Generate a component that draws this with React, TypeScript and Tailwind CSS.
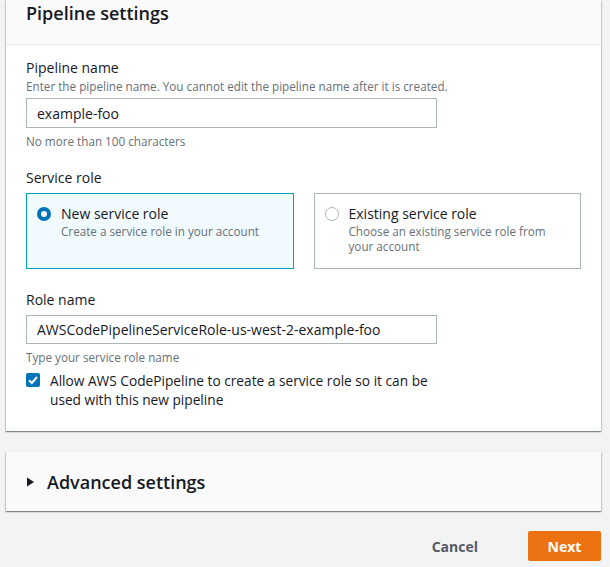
// Pipeline settings step – CodePipeline create wizard
const FONT = "font-['Open_Sans','Noto_Sans',sans-serif]"

function Radio({ checked }: { checked: boolean }) {
  return checked ? (
    <span className="mt-[3px] flex h-[14px] w-[14px] shrink-0 items-center justify-center rounded-full bg-[#0073bb]">
      <span className="h-[6px] w-[6px] rounded-full bg-white" />
    </span>
  ) : (
    <span className="mt-[3px] h-[14px] w-[14px] shrink-0 rounded-full border border-[#aab7b8] bg-white" />
  )
}

function RoleTile({
  title,
  desc,
  checked,
}: {
  title: string
  desc: string
  checked: boolean
}) {
  return (
    <div
      className={
        checked
          ? 'flex h-[76px] gap-[10px] border border-[#00a1c9] bg-[#f1faff] pl-[10px] pr-4 pt-[10px]'
          : 'flex h-[76px] gap-[10px] border border-[#aab7b8] bg-white pl-[10px] pr-4 pt-[10px]'
      }
    >
      <Radio checked={checked} />
      <div>
        <div className="text-[14px] leading-[20px] text-[#16191f]">{title}</div>
        <div className="text-[11.7px] leading-[15px] text-[#687078]">{desc}</div>
      </div>
    </div>
  )
}

export default function App() {
  return (
    <div className={`${FONT} h-[567px] w-[610px] overflow-hidden bg-[#f2f3f3] pl-[6px] pr-[9px]`}>
      {/* Pipeline settings card */}
      <div className="bg-white shadow-[0_1px_1px_0_rgba(0,28,36,0.3),1px_1px_1px_0_rgba(0,28,36,0.15),-1px_1px_1px_0_rgba(0,28,36,0.15)]">
        <div className="h-[45px] border-b border-[#eaeded] bg-[#fafafa] px-5 pt-[2px]">
          <h2 className="text-[18px] font-semibold leading-[22px] text-[#16191f]">Pipeline settings</h2>
        </div>

        <div className="px-5 pb-[22px] pt-[13px]">
          <div className="text-[14px] leading-[20px] text-[#16191f]">Pipeline name</div>
          <div className="text-[11.7px] leading-[16px] text-[#687078]">
            Enter the pipeline name. You cannot edit the pipeline name after it is created.
          </div>
          <div className="mt-[4px] flex h-[30px] w-[411px] items-center border border-[#aab7b8] bg-white px-[10px] text-[14px] text-[#16191f]">
            example-foo
          </div>
          <div className="mt-[5px] text-[11.7px] leading-[16px] text-[#687078]">No more than 100 characters</div>

          <div className="mt-[19px] text-[14px] leading-[20px] text-[#16191f]">Service role</div>
          <div className="mt-[5px] grid grid-cols-2 gap-5">
            <RoleTile title="New service role" desc="Create a service role in your account" checked />
            <RoleTile
              title="Existing service role"
              desc="Choose an existing service role from your account"
              checked={false}
            />
          </div>

          <div className="mt-[21px] text-[14px] leading-[20px] text-[#16191f]">Role name</div>
          <div className="mt-[5px] flex h-[29px] w-[411px] items-center border border-[#aab7b8] bg-white px-[10px] text-[14px] text-[#16191f]">
            AWSCodePipelineServiceRole-us-west-2-example-foo
          </div>
          <div className="mt-[5px] text-[11.7px] leading-[16px] text-[#687078]">Type your service role name</div>
          <div className="mt-[6px] flex gap-[10px]">
            <span className="mt-[2px] flex h-[14px] w-[14px] shrink-0 items-center justify-center rounded-[2px] bg-[#0073bb]">
              <svg viewBox="0 0 14 14" className="h-[14px] w-[14px]">
                <path d="M3 7.2l2.8 2.8L11 4" fill="none" stroke="white" strokeWidth="2" />
              </svg>
            </span>
            <div className="w-[400px] text-[13.7px] leading-[19px] text-[#16191f]">
              Allow AWS CodePipeline to create a service role so it can be used with this new pipeline
            </div>
          </div>
        </div>
      </div>

      {/* Advanced settings */}
      <div className="mt-[21px] flex h-[59px] items-center gap-[12px] bg-[#fafafa] pl-[19px] shadow-[0_1px_1px_0_rgba(0,28,36,0.3),1px_1px_1px_0_rgba(0,28,36,0.15),-1px_1px_1px_0_rgba(0,28,36,0.15)]">
        <svg viewBox="0 0 10 10" className="h-[10px] w-[10px]">
          <path d="M2 0.5L9 5L2 9.5Z" fill="#16191f" />
        </svg>
        <span className="text-[18px] font-semibold leading-[22px] text-[#16191f]">Advanced settings</span>
      </div>

      {/* Footer actions */}
      <div className="mt-[20px] flex items-center justify-end gap-[30px]">
        <button className="px-5 text-[14px] font-bold text-[#545b64]">Cancel</button>
        <button className="h-[30px] w-[73px] rounded-[2px] bg-[#ec7211] text-[14px] font-bold text-white">
          Next
        </button>
      </div>
    </div>
  )
}
